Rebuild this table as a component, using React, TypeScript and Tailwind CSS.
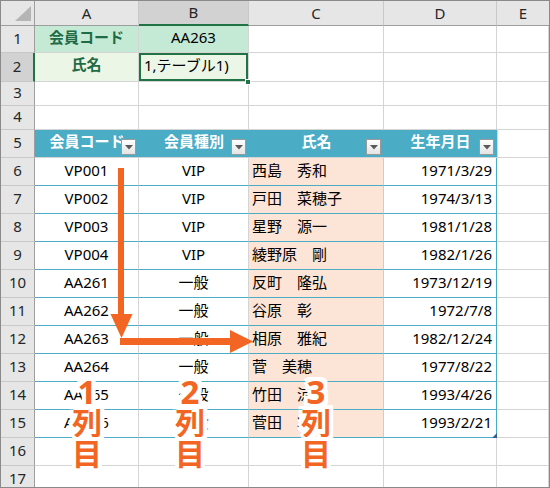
import React from "react";

const W = { h: "w-[34px]", a: "w-[104px]", b: "w-[110px]", c: "w-[135px]", d: "w-[113px]", e: "w-[52px]" };

const members = [
  ["VP001", "VIP", "西島　秀和", "1971/3/29"],
  ["VP002", "VIP", "戸田　菜穂子", "1974/3/13"],
  ["VP003", "VIP", "星野　源一", "1981/1/28"],
  ["VP004", "VIP", "綾野原　剛", "1982/1/26"],
  ["AA261", "一般", "反町　隆弘", "1973/12/19"],
  ["AA262", "一般", "谷原　彰", "1972/7/8"],
  ["AA263", "一般", "相原　雅紀", "1982/12/24"],
  ["AA264", "一般", "菅　美穂", "1977/8/22"],
  ["AA265", "一般", "竹田　涼真", "1993/4/26"],
  ["AA266", "一般", "菅田　将暉", "1993/2/21"],
];

function RowHead({ n, selected = false }: { n: number; selected?: boolean }) {
  return (
    <div
      className={`${W.h} shrink-0 flex items-center justify-center pb-[2px] text-[15px] text-[#262626] border-b border-[#c8c8c8] ${
        selected ? "bg-[#d2d2d2] border-r-2 border-r-[#217346]" : "bg-[#e6e6e6] border-r border-r-[#9e9e9e]"
      }`}
    >
      {n}
    </div>
  );
}

function FilterBtn() {
  return (
    <div className="absolute right-[3px] bottom-[2px] w-[15px] h-[16px] border border-[#9a9a9a] bg-gradient-to-b from-white to-[#e4e4e4] flex items-center justify-center">
      <svg width="8" height="5" viewBox="0 0 8 5">
        <path d="M0 0 L8 0 L4 4.5 Z" fill="#5a5a5a" />
      </svg>
    </div>
  );
}

// big orange label with a white halo, stacked one glyph per line
function Halo({ chars, left }: { chars: string[]; left: string }) {
  return (
    <div className={`absolute top-[375px] ${left} w-[40px] flex flex-col items-center text-[30px] leading-[31px] font-bold text-[#f26522] [text-shadow:4px_0_0_#fff,-4px_0_0_#fff,0_4px_0_#fff,0_-4px_0_#fff,4px_4px_0_#fff,-4px_-4px_0_#fff,4px_-4px_0_#fff,-4px_4px_0_#fff,2px_0_0_#fff,-2px_0_0_#fff,0_2px_0_#fff,0_-2px_0_#fff]`}>
      <span className="text-[33px]">{chars[0]}</span>
      {chars.slice(1).map((c, i) => (
        <span key={i}>{c}</span>
      ))}
    </div>
  );
}

export default function App() {
  const grid = "border-r border-b border-[#d4d4d4]";
  return (
    <div className="relative w-[550px] h-[488px] overflow-hidden bg-white border border-[#8a8a8a] font-['Noto_Sans','Noto_Sans_CJK_JP',sans-serif] text-[15px] text-black">
      {/* column letters */}
      <div className="flex h-[25px] bg-[#e6e6e6] text-[15px] text-[#262626]">
        <div className={`${W.h} shrink-0 flex items-end justify-end pr-[2px] pb-[3px] border-r border-b border-[#9e9e9e]`}>
          <svg width="18" height="16" viewBox="0 0 18 16">
            <path d="M17 0 L17 15 L1 15 Z" fill="#b5b5b5" />
          </svg>
        </div>
        <div className={`${W.a} shrink-0 flex items-center justify-center border-r border-r-[#c8c8c8] border-b border-b-[#9e9e9e]`}>A</div>
        <div className={`${W.b} shrink-0 flex items-center justify-center bg-[#d2d2d2] border-r border-r-[#c8c8c8] border-b-2 border-b-[#217346]`}>B</div>
        <div className={`${W.c} shrink-0 flex items-center justify-center border-r border-r-[#c8c8c8] border-b border-b-[#9e9e9e]`}>C</div>
        <div className={`${W.d} shrink-0 flex items-center justify-center border-r border-r-[#c8c8c8] border-b border-b-[#9e9e9e]`}>D</div>
        <div className={`${W.e} shrink-0 flex items-center justify-center border-b border-b-[#9e9e9e]`}>E</div>
      </div>

      {/* row 1 */}
      <div className="flex h-[27px]">
        <RowHead n={1} />
        <div className={`${W.a} shrink-0 ${grid} bg-[#c4ead5] flex items-center justify-center pb-[3px] font-bold text-[#1f6b45]`}>会員コード</div>
        <div className={`${W.b} shrink-0 ${grid} bg-[#c4ead5] flex items-center justify-center pb-[3px]`}>AA263</div>
        <div className={`${W.c} shrink-0 ${grid}`} />
        <div className={`${W.d} shrink-0 ${grid}`} />
        <div className={`${W.e} shrink-0 ${grid}`} />
      </div>

      {/* row 2 */}
      <div className="flex h-[29px]">
        <RowHead n={2} selected />
        <div className={`${W.a} shrink-0 ${grid} bg-[#ebf6e6] flex items-center justify-center pb-[5px] font-bold text-[#1f6b45]`}>氏名</div>
        <div className={`${W.b} shrink-0 ${grid} bg-[#ebf6e6] shadow-[inset_0_0_0_2px_#217346] flex items-center pl-[5px] pb-[3px]`}>1,テーブル1)</div>
        <div className={`${W.c} shrink-0 ${grid}`} />
        <div className={`${W.d} shrink-0 ${grid}`} />
        <div className={`${W.e} shrink-0 ${grid}`} />
      </div>

      {/* rows 3-4 */}
      {[3, 4].map((n) => (
        <div key={n} className="flex h-[24px]">
          <RowHead n={n} />
          <div className={`${W.a} shrink-0 ${grid}`} />
          <div className={`${W.b} shrink-0 ${grid}`} />
          <div className={`${W.c} shrink-0 ${grid}`} />
          <div className={`${W.d} shrink-0 ${grid}`} />
          <div className={`${W.e} shrink-0 ${grid}`} />
        </div>
      ))}

      {/* row 5 - table header */}
      <div className="flex h-[28px]">
        <RowHead n={5} />
        {[
          ["会員コード", W.a],
          ["会員種別", W.b],
          ["氏名", W.c],
          ["生年月日", W.d],
        ].map(([label, w]) => (
          <div key={label} className={`${w} shrink-0 relative bg-[#4bacc6] border-b border-[#d4d4d4] flex items-center justify-center pb-[4px] font-bold text-white`}>
            {label}
            <FilterBtn />
          </div>
        ))}
        <div className={`${W.e} shrink-0 ${grid} border-l border-l-[#d4d4d4]`} />
      </div>

      {/* table body */}
      {members.map(([code, kind, name, birth], i) => (
        <div key={code} className="flex h-[28px]">
          <RowHead n={i + 6} />
          <div className={`${W.a} shrink-0 border-r border-r-[#d4d4d4] border-b border-b-[#4bacc6] flex items-center justify-center pb-[3px]`}>{code}</div>
          <div className={`${W.b} shrink-0 border-r border-r-[#d4d4d4] border-b border-b-[#4bacc6] flex items-center justify-center pb-[3px]`}>{kind}</div>
          <div className={`${W.c} shrink-0 bg-[#fce4d6] border-r border-r-[#e2c6b8] border-b border-b-[#4bacc6] flex items-center pl-[3px] pb-[3px] font-['Noto_Sans_CJK_JP',sans-serif]`}>{name}</div>
          <div className={`${W.d} shrink-0 border-r border-r-[#4bacc6] border-b border-b-[#4bacc6] flex items-center justify-end pr-[4px] pb-[3px]`}>{birth}</div>
          <div className={`${W.e} shrink-0 ${grid}`} />
        </div>
      ))}

      {/* rows 16-17 */}
      {[16, 17].map((n) => (
        <div key={n} className="flex h-[28px]">
          <RowHead n={n} />
          <div className={`${W.a} shrink-0 ${grid}`} />
          <div className={`${W.b} shrink-0 ${grid}`} />
          <div className={`${W.c} shrink-0 ${grid}`} />
          <div className={`${W.d} shrink-0 ${grid}`} />
          <div className={`${W.e} shrink-0 ${grid}`} />
        </div>
      ))}

      {/* fill handle of the selected cell */}
      <div className="absolute left-[244px] top-[78px] w-[6px] h-[6px] bg-[#217346] border border-white" />

      {/* arrows and table resize handle */}
      <svg className="absolute left-0 top-0 pointer-events-none" width="548" height="486" viewBox="1 1 548 486">
        <rect x="118" y="168" width="6" height="148" fill="#f26522" />
        <path d="M110.5 314 L132.5 314 L121.5 338 Z" fill="#f26522" />
        <rect x="120" y="338" width="112" height="7" fill="#f26522" />
        <path d="M230 330 L230 353 L253 341.5 Z" fill="#f26522" />
        <path d="M497 433 L497 438 L492 438 Z" fill="#2f5f8f" />
      </svg>

      <Halo chars={["1", "列", "目"]} left="left-[66px]" />
      <Halo chars={["2", "列", "目"]} left="left-[169px]" />
      <Halo chars={["3", "列", "目"]} left="left-[295px]" />
    </div>
  );
}
